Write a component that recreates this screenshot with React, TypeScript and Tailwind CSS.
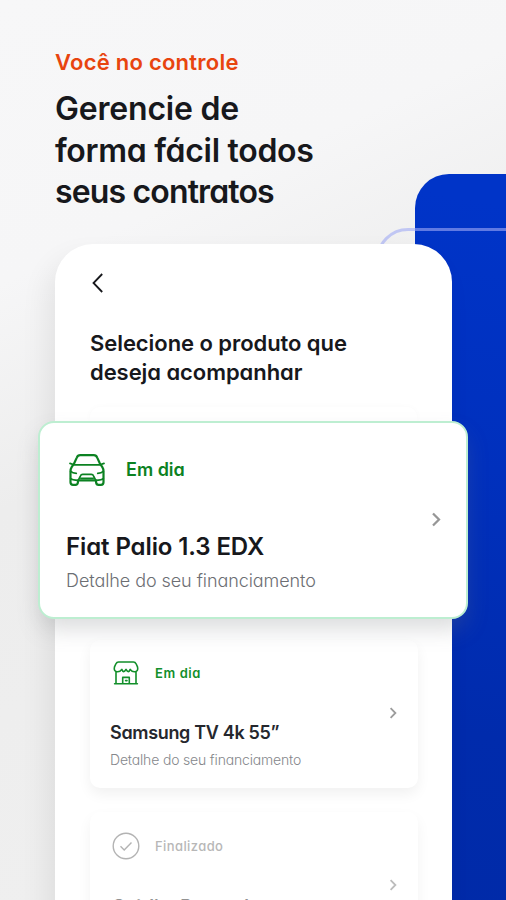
import React from "react";

type IconProps = { className?: string };

const Chevron = ({ className }: IconProps) => (
  <svg viewBox="0 0 8 12" fill="none" stroke="currentColor" className={className}>
    <path d="M1.6 1.2 6.4 6 1.6 10.8" strokeWidth="1.8" />
  </svg>
);

const BackArrow = () => (
  <svg viewBox="0 0 12 20" className="h-5 w-3" fill="none" stroke="#17181c" strokeWidth="1.8">
    <path d="M10.2 1 1.5 10l8.7 9" />
  </svg>
);

const Car = () => (
  <svg viewBox="0 0 36 32" className="h-8 w-9" fill="none" stroke="#0c8222" strokeWidth="2.2" strokeLinecap="round" strokeLinejoin="round">
    <path d="M5.2 9.3 7.8 3.6Q8.7 1.2 11.2 1.2H24.8Q27.3 1.2 28.2 3.6L30.8 9.3L33.2 12.8Q34.5 14.8 34.5 17.2V28.3Q34.5 30.8 32 30.8H29.6Q27.3 30.8 27.1 28.3L26.9 26.3H9.1L8.9 28.3Q8.7 30.8 6.4 30.8H4Q1.5 30.8 1.5 28.3V17.2Q1.5 14.8 2.8 12.8L5.2 9.3" />
    <path strokeWidth="1.7" d="M1 9.4 4.8 10.8H31.2L35 9.4M1.7 17.4Q3.5 19.3 7.3 19.3M34.3 17.4Q32.5 19.3 28.7 19.3M1.7 24.6Q3 26.3 9.2 26.3L11.5 21.8Q12 20.4 13.7 20.4H22.3Q24 20.4 24.5 21.8L26.8 26.3Q33 26.3 34.3 24.6M12 24.4H24" />
  </svg>
);

const Shop = () => (
  <svg viewBox="0 0 26 24" className="h-6 w-[26px]" fill="none" stroke="#128f2a" strokeWidth="1.6" strokeLinecap="round" strokeLinejoin="round">
    <path d="M5.5 1H20.5Q22.2 1 23.2 3L24.5 5.8Q25.6 10.6 21.7 10.8Q18.8 11 17.2 8.4Q15.5 12.8 13 8.4Q10.5 12.8 8.8 8.4Q7.2 11 4.3 10.8Q.4 10.6 1.5 5.8L2.8 3Q3.8 1 5.5 1ZM3 10.8V22.8M23 10.8V22.8M1.6 22.8H24.4M9.7 22.8V16.4H16.3V22.8M12.6 19.6H14" />
  </svg>
);

const Done = () => (
  <svg viewBox="0 0 28 28" className="h-7 w-7" fill="none" stroke="#b3b3b3" strokeWidth="1.4">
    <circle cx="14" cy="14" r="12.8" />
    <path d="m8.5 14.3 3.7 3.6 7.3-7.5" />
  </svg>
);

export default function App() {
  return (
    <main className="relative isolate h-[900px] w-[506px] overflow-hidden bg-[linear-gradient(155deg,#f7f7f8_0%,#f6f6f7_25%,#ededed_45%,#f0f0f0_100%)] font-['Inter','Lato',sans-serif] text-[#17181c] [font-feature-settings:'cv11']">
      <div className="absolute top-[174px] left-[415px] -z-10 h-[740px] w-[130px] rounded-tl-[34px] bg-[linear-gradient(190deg,#0034c8_5%,#0030bd_40%,#002bac_75%,#002aa8_100%)]" />
      <div className="absolute top-[228px] left-[376px] -z-10 h-[800px] w-[180px] rounded-tl-[32px] border-[3px] border-[#a0aaf5]/60" />

      <header className="pt-[49px] pl-[55px] whitespace-nowrap">
        <p className="text-[22px] leading-[26px] font-semibold tracking-[0.25px] text-[#e8440f]">Você no controle</p>
        <h1 className="mt-[13px] text-[32px] leading-[41.7px] font-semibold tracking-[-0.3px]">
          <span className="tracking-[-0.2px]">Gerencie de</span><br />forma fácil todos<br />
          <span className="tracking-[-0.85px]">seus contratos</span>
        </h1>
      </header>

      <section className="mt-[31px] ml-[55px] h-[670px] w-[397px] rounded-t-[38px] bg-white px-[35px] pt-[29px] shadow-[-8px_14px_28px_rgba(0,0,0,0.07)]">
        <div className="ml-[2px]"><BackArrow /></div>
        <h2 className="mt-[36px] text-[22px] leading-[29px] font-semibold tracking-[-0.06px] whitespace-nowrap">
          Selecione o produto que<br />deseja acompanhar
        </h2>
        <div className="mt-[20px] h-[14px] rounded-t-[10px] shadow-[0_0_7px_rgba(0,0,0,0.025)]" />

        <article className="relative z-10 mr-[-51px] ml-[-52px] flex h-[198px] items-center justify-between rounded-[16px] border-2 border-[#bdeed1] bg-white pr-[25px] pl-[26px] shadow-[0_12px_22px_-2px_rgba(115,120,125,0.26)]">
          <div className="self-stretch pt-[31px] whitespace-nowrap">
            <div className="flex h-8 items-center gap-[21px] pl-[3px]">
              <Car />
              <span className="text-[18px] leading-6 font-semibold text-[#0c8222]">Em dia</span>
            </div>
            <h3 className="mt-[46px] text-[24px] leading-[30px] font-semibold tracking-[-0.1px]">Fiat Palio 1.3 EDX</h3>
            <p className="mt-[7px] text-[18px] leading-6 font-light tracking-[-0.07px] text-[#6c6e73]">Detalhe do seu financiamento</p>
          </div>
          <Chevron className="mb-px h-[15px] w-[10px] text-[#969696]" />
        </article>

        <article className="mt-[21px] mr-[-1px] flex h-[148px] items-center justify-between rounded-[10px] bg-white pr-[21px] pl-[20px] shadow-[0_6px_14px_rgba(0,0,0,0.06)]">
          <div className="self-stretch pt-[21px] whitespace-nowrap">
            <div className="flex h-6 items-center gap-[16px] pl-[3px]">
              <Shop />
              <span className="text-[13px] leading-5 font-semibold tracking-[0.6px] text-[#128f2a]">Em dia</span>
            </div>
            <h3 className="mt-[36px] text-[18px] leading-6 font-semibold tracking-[-0.33px] text-[#25272d]">Samsung TV 4k 55”</h3>
            <p className="mt-[5px] text-[14px] leading-5 font-light tracking-[-0.17px] text-[#85878b]">Detalhe do seu financiamento</p>
          </div>
          <Chevron className="mb-[3px] h-3 w-2 text-[#9c9c9c]" />
        </article>

        <article className="mt-[24px] mr-[-1px] flex h-[149px] items-center justify-between rounded-[10px] bg-white pr-[21px] pl-[20px] shadow-[0_6px_14px_rgba(0,0,0,0.05)]">
          <div className="self-stretch pt-[20px] whitespace-nowrap">
            <div className="flex h-7 items-center gap-[15px] pl-[2px]">
              <Done />
              <span className="text-[13px] leading-5 font-medium tracking-[0.4px] text-[#b7b7b7]">Finalizado</span>
            </div>
            <h3 className="mt-[35px] pl-[2px] text-[18px] leading-6 font-semibold text-[#929292]">Crédito Pessoal</h3>
            <p className="mt-[6px] text-[14px] leading-5 font-light text-[#b7b7b7]">Detalhe do seu financiamento</p>
          </div>
          <Chevron className="mb-[3px] h-3 w-2 text-[#bcbcbc]" />
        </article>
      </section>
    </main>
  );
}
